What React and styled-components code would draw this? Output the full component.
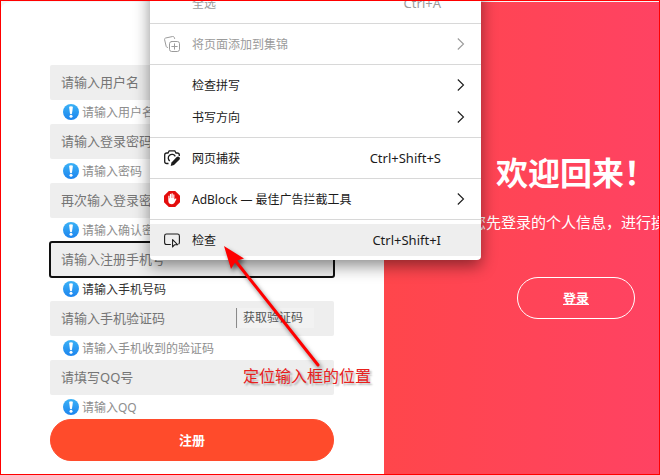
import React from "react";
import styled, { createGlobalStyle, css } from "styled-components";

const GlobalStyle = createGlobalStyle`
  *, *::before, *::after { box-sizing: border-box; }
  body {
    margin: 0;
    background: #f6f5f7;
    font-family: "Noto Sans", "Noto Sans CJK SC", sans-serif;
    font-size: 12px;
  }
  button, input { font-family: inherit; margin: 0; }
`;

const Page = styled.main`
  position: relative;
  display: flex;
  min-height: 100vh;
  padding-top: 2px;
  overflow: hidden;

  &::after {
    content: "";
    position: absolute;
    inset: 0;
    z-index: 5;
    border: 1px solid #ff0000;
    pointer-events: none;
  }
`;

const Card = styled.section`
  display: grid;
  grid-template-columns: repeat(2, minmax(0, 1fr));
  flex: 1 0 768px;
  border-radius: 10px 0 0 0;
  background: #fff;
`;

const Form = styled.form`
  display: flex;
  flex-direction: column;
  padding: 63px 50px 14px;
`;

const Field = styled.div`
  display: flex;
  align-items: center;
  height: 35px;
  border-radius: 2px;
  background: #eee;
  ${(p) =>
    p.$focused &&
    css`
      outline: 2px solid #101010;
      outline-offset: -1px;
    `}
`;

const TextInput = styled.input`
  flex: 1;
  min-width: 0;
  height: 35px;
  padding: 0 11px 2px;
  border: 0;
  outline: 0;
  background: transparent;
  font-size: 13px;
  color: #333;

  &::placeholder { color: #757575; opacity: 1; }
`;

const CodeSlot = styled.div`
  display: flex;
  margin: 0 20px 2px 0;
  padding-left: 1px;
  border-left: 1px solid #8a8a8a;
`;

const CodeButton = styled.button`
  width: 76px;
  height: 20px;
  padding: 0 10px 0 5px;
  border: 0;
  background: #f2f2f2;
  color: #555;
  font-size: 12px;
  line-height: 20px;
  text-align: left;
  white-space: nowrap;
`;

const Hint = styled.label`
  display: flex;
  align-items: center;
  gap: 3px;
  height: 24px;
  padding-left: 13px;
  color: ${(p) => (p.$active ? "#333" : "#8e8e8e")};
`;

const pill = css`
  height: 42px;
  border-radius: 21px;
  color: #fff;
  font-size: 13px;
  line-height: 40px;
  font-weight: 700;
  text-align: center;
`;

const SubmitButton = styled.button`
  ${pill}
  padding: 0;
  border: 1px solid #ff4b2b;
  background: #ff4b2b;
`;

const LoginLink = styled.a`
  ${pill}
  width: 118px;
  border: 1px solid #fff;
  text-decoration: underline;
`;

const Welcome = styled.aside`
  display: flex;
  flex-direction: column;
  align-items: center;
  padding-top: 147px;
  background: linear-gradient(to right, #ff464b, #ff416c);
  color: #fff;
`;

const Title = styled.h1`
  margin: 0;
  font-size: 32px;
  line-height: 48px;
  font-weight: 700;
`;

const Lead = styled.p`
  margin: 15px 0 45px;
  font-size: 15px;
  line-height: 20px;
`;

const Menu = styled.div`
  position: absolute;
  z-index: 2;
  top: -17px;
  left: 150px;
  width: 331px;
  padding: 4px 0;
  border-radius: 4px;
  background: #fff;
  box-shadow: 0 6px 16px rgba(0, 0, 0, 0.45);
`;

const MenuItem = styled.button`
  display: grid;
  grid-template-columns: 16px 1fr auto 8px;
  column-gap: 12px;
  align-items: center;
  width: 100%;
  height: 32px;
  padding: 0 16px 0 14px;
  border: 0;
  background: ${(p) => (p.$hovered ? "#eee" : "transparent")};
  color: ${(p) => (p.disabled ? "#9b9b9b" : "#1b1b1b")};
  font-size: 12px;
  text-align: left;
`;

const ItemIcon = styled.span`
  display: flex;
`;

const Shortcut = styled.span`
  padding-right: 4px;
  font-size: 13px;
`;

const Divider = styled.hr`
  height: 1px;
  margin: 4px 0;
  border: 0;
  background: #d8d8d8;
`;

const Annotation = styled.div`
  position: absolute;
  z-index: 3;
  top: 240px;
  left: 216px;
  pointer-events: none;
`;

const Arrow = styled.svg`
  display: block;
  margin-bottom: -12px;
  overflow: visible;
  filter: drop-shadow(2px 3px 2px rgba(0, 0, 0, 0.5));
`;

const AnnotationText = styled.span`
  display: block;
  padding-left: 27px;
  color: #e8201c;
  font-size: 16px;
  line-height: 24px;
  text-shadow: 2px 2px 2px rgba(0, 0, 0, 0.3);
  white-space: nowrap;
`;

const InfoIcon = () => (
  <svg width="16" height="16" viewBox="0 0 16 16" aria-hidden="true">
    <defs>
      <linearGradient id="info" x1="0" y1="0" x2="0" y2="1">
        <stop offset="0" stopColor="#3bb2f6" />
        <stop offset="1" stopColor="#1c84ee" />
      </linearGradient>
    </defs>
    <circle cx="8" cy="8" r="8" fill="url(#info)" />
    <path d="M6.1 2.8Q8 1.8 9.9 2.8L9 9.8Q8 10.5 7 9.8Z" fill="#fff" />
    <circle cx="8" cy="12.3" r="1.5" fill="#fff" />
  </svg>
);

const CollectionIcon = () => (
  <svg width="16" height="16" viewBox="0 0 16 16" fill="none" stroke="currentColor" strokeLinecap="round" aria-hidden="true">
    <path d="M3.5 11.5Q2.5 11.5 2.2 10.4L.6 3.7Q.3 2.4 1.6 2L8.6.5Q9.8.3 10.3 1.5L10.6 2.5" />
    <rect x="5.5" y="5.5" width="10" height="10" rx="2.2" />
    <path d="M10.5 7.8v5.4M7.8 10.5h5.4" />
  </svg>
);

const CaptureIcon = () => (
  <svg width="16" height="16" viewBox="0 0 16 16" fill="none" stroke="currentColor" strokeWidth="1.3" aria-hidden="true">
    <path d="M4.5 13.5H2.8Q.7 13.5.7 11.5V5Q.7 3 2.8 3H4L5.2.8H10.8L12 3H13.2Q15.3 3 15.3 5V6" />
    <path d="M5.8 11A3.7 3.7 0 1 1 11.3 6.4" />
    <path d="M15.3 7.1Q16.5 8.5 15.3 9.7L10 15L6.7 15.9L7.5 12.4L12.7 7.1Q14 5.900 15.3 7.100Z" fill="currentColor" stroke="none" />
  </svg>
);

const AdBlockIcon = () => (
  <svg width="16" height="16" viewBox="0 0 16 16" aria-hidden="true">
    <path d="M4.8 0H11.2L16 4.8V11.2L11.2 16H4.8L0 11.2V4.8Z" fill="#e40d0d" />
    <path d="M4.3 8V5Q4.9 4.2 5.5 5V7.3H5.9V3.3Q6.5 2.4 7.2 3.3V7H7.5V2.6Q8.2 1.8 8.8 2.6V7H9.2V3.7Q9.8 2.9 10.4 3.7V8.5L11.4 7.5Q12.4 7.1 12.5 8L10.5 11.8Q9.6 13.2 8 13.2Q4.6 13.2 4.3 10Z" fill="#fff" />
  </svg>
);

const InspectIcon = () => (
  <svg width="16" height="16" viewBox="0 0 16 16" fill="none" stroke="currentColor" strokeWidth="1.1" aria-hidden="true">
    <path d="M6.8 12.5H2.5Q.6 12.5.6 10.6V3.9Q.6 2 2.5 2H13.5Q15.4 2 15.4 3.9V10.6Q15.4 11.7 14.5 12.2" />
    <path d="M8.6 7.6V15L10.5 12.8L13.5 12.7Z" fill="#fff" strokeLinejoin="round" />
  </svg>
);

const Chevron = () => (
  <svg width="8" height="12" viewBox="0 0 8 12" fill="none" stroke="currentColor" strokeWidth="1.1" aria-hidden="true">
    <path d="M.8.5L6.5 6L.8 11.5" />
  </svg>
);

const fields = [
  { id: "user", placeholder: "请输入用户名", hint: "请输入用户名" },
  { id: "password", type: "password", placeholder: "请输入登录密码", hint: "请输入密码" },
  { id: "confirm", type: "password", placeholder: "再次输入登录密码", hint: "请输入确认密码" },
  { id: "phone", type: "tel", placeholder: "请输入注册手机号", hint: "请输入手机号码", active: true },
  { id: "code", placeholder: "请输入手机验证码", hint: "请输入手机收到的验证码", code: true },
  { id: "qq", placeholder: "请填写QQ号", hint: "请输入QQ" },
];

const menuGroups = [
  [{ label: "全选", shortcut: "Ctrl+A", disabled: true }],
  [{ label: "将页面添加到集锦", icon: <CollectionIcon />, submenu: true, disabled: true }],
  [
    { label: "检查拼写", submenu: true },
    { label: "书写方向", submenu: true },
  ],
  [{ label: "网页捕获", icon: <CaptureIcon />, shortcut: "Ctrl+Shift+S" }],
  [{ label: "AdBlock — 最佳广告拦截工具", icon: <AdBlockIcon />, submenu: true }],
  [{ label: "检查", icon: <InspectIcon />, shortcut: "Ctrl+Shift+I", hovered: true }],
];

export default function App() {
  return (
    <>
      <GlobalStyle />
      <Page>
        <Card>
          <Form onSubmit={(e) => e.preventDefault()}>
            {fields.map((f) => (
              <React.Fragment key={f.id}>
                <Field $focused={f.active}>
                  <TextInput id={f.id} type={f.type || "text"} placeholder={f.placeholder} />
                  {f.code && (
                    <CodeSlot>
                      <CodeButton type="button">获取验证码</CodeButton>
                    </CodeSlot>
                  )}
                </Field>
                <Hint htmlFor={f.id} $active={f.active}>
                  <InfoIcon />
                  {f.hint}
                </Hint>
              </React.Fragment>
            ))}
            <SubmitButton type="submit">注册</SubmitButton>
          </Form>
          <Welcome>
            <Title>欢迎回来！</Title>
            <Lead>您先登录的个人信息，进行操作</Lead>
            <LoginLink href="#login">登录</LoginLink>
          </Welcome>
        </Card>

        <Menu role="menu">
          {menuGroups.map((group, i) => (
            <React.Fragment key={group[0].label}>
              {i > 0 && <Divider />}
              {group.map((item) => (
                <MenuItem key={item.label} role="menuitem" type="button" disabled={item.disabled} $hovered={item.hovered}>
                  <ItemIcon>{item.icon}</ItemIcon>
                  <span>{item.label}</span>
                  <Shortcut>{item.shortcut}</Shortcut>
                  {item.submenu && <Chevron />}
                </MenuItem>
              ))}
            </React.Fragment>
          ))}
        </Menu>

        <Annotation>
          <Arrow width="116" height="136" viewBox="0 0 116 136" aria-hidden="true">
            <path d="M18 19L102 125" stroke="#fe0000" strokeWidth="3" strokeLinecap="round" />
            <path d="M8 6L28 18.5L20 21L15 29Z" fill="#fe0000" />
          </Arrow>
          <AnnotationText>定位输入框的位置</AnnotationText>
        </Annotation>
      </Page>
    </>
  );
}
